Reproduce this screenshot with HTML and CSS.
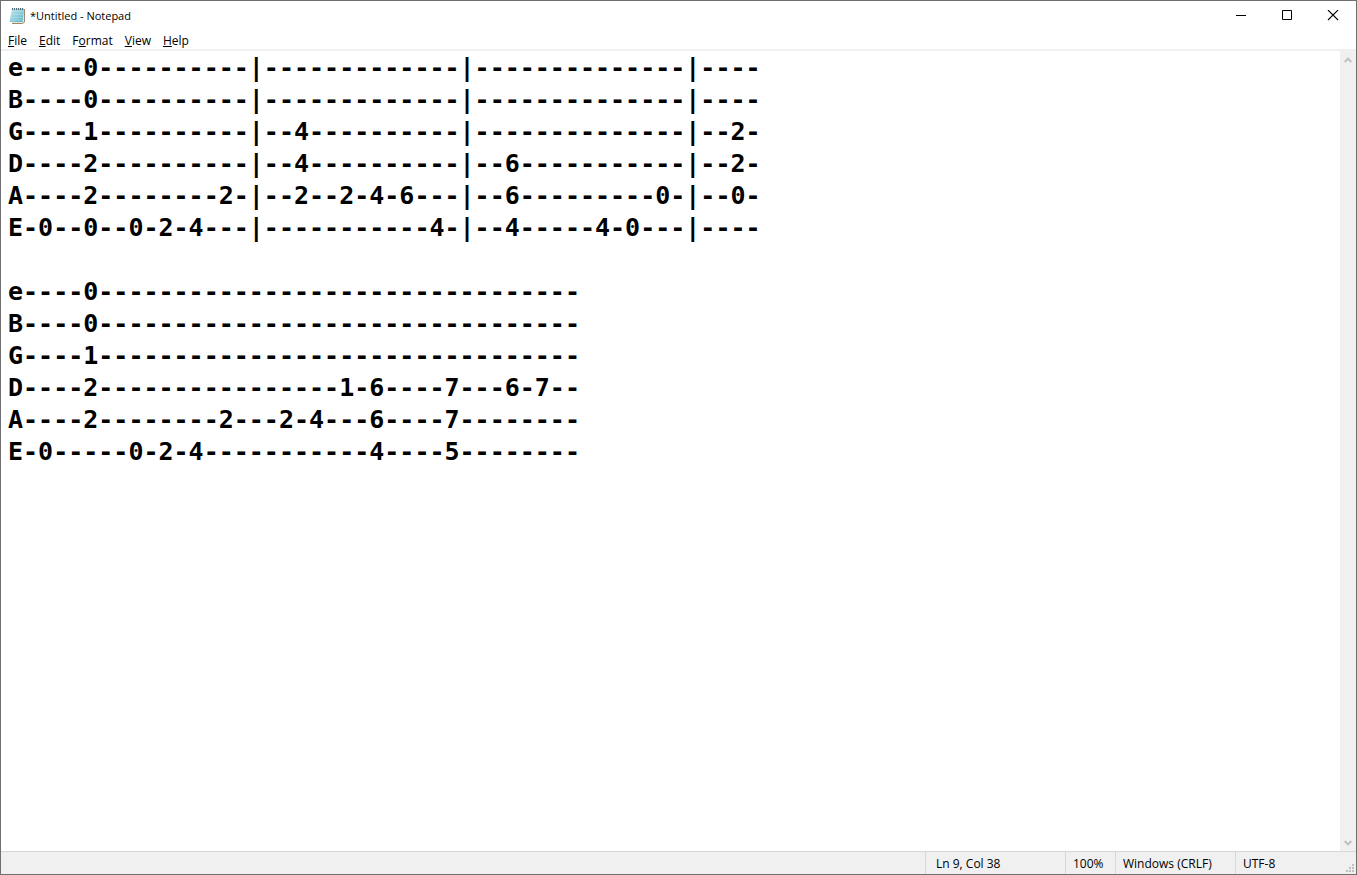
FILE: index.html
```html
<!DOCTYPE html>
<html lang="en">
<head>
<meta charset="utf-8">
<title>*Untitled - Notepad</title>
<link rel="stylesheet" href="styles.css">
</head>
<body>
<div class="window">
  <header class="titlebar">
    <svg class="app-icon" width="17" height="17" viewBox="0 0 17 17" aria-hidden="true">
      <defs>
        <linearGradient id="page" x1="0" y1="0" x2="1" y2="1">
          <stop offset="0" stop-color="#c3e7ef"/>
          <stop offset="0.5" stop-color="#92cfdd"/>
          <stop offset="1" stop-color="#4eabc4"/>
        </linearGradient>
      </defs>
      <path d="M4 2H16V15L14 16.500H3Z" fill="#e9e4d2"/>
      <path d="M15.500 2V15L13.500 16.500H3" fill="none" stroke="#9a8a68"/>
      <path d="M3 1.500H15L13.500 15H0.500Z" fill="url(#page)"/>
      <path d="M3 4.500H14M2.500 7.500H13.500M2 10.500H13.500M1.500 13H13" stroke="#b5dfe9" stroke-width="0.700"/>
      <path d="M3.500 1V3M5.500 1V3M7.500 1V3M9.500 1V3M11.500 1V3M13.500 1V3" stroke="#4c6870"/>
    </svg>
    <h1 class="title">*Untitled - Notepad</h1>
    <div class="window-controls">
      <button class="window-button" type="button" aria-label="Minimize">
        <svg width="12" height="11" viewBox="0 0 12 11"><path d="M1 5.500H11" stroke="#000"/></svg>
      </button>
      <button class="window-button" type="button" aria-label="Maximize">
        <svg width="12" height="11" viewBox="0 0 12 11"><path d="M1.500 .5H10.500V9.500H1.500Z" fill="none" stroke="#000"/></svg>
      </button>
      <button class="window-button" type="button" aria-label="Close">
        <svg width="12" height="11" viewBox="0 0 12 11"><path d="M1 0L11 10M11 0L1 10" stroke="#000" stroke-width="1.100"/></svg>
      </button>
    </div>
  </header>
  <nav class="menubar" aria-label="Menu">
    <button class="menu" type="button"><u>F</u>ile</button>
    <button class="menu" type="button"><u>E</u>dit</button>
    <button class="menu" type="button">F<u>o</u>rmat</button>
    <button class="menu" type="button"><u>V</u>iew</button>
    <button class="menu" type="button"><u>H</u>elp</button>
  </nav>
  <main class="editor">
    <textarea class="document" aria-label="Document text" wrap="off" spellcheck="false">
e----0----------|-------------|--------------|----
B----0----------|-------------|--------------|----
G----1----------|--4----------|--------------|--2-
D----2----------|--4----------|--6-----------|--2-
A----2--------2-|--2--2-4-6---|--6---------0-|--0-
E-0--0--0-2-4---|-----------4-|--4-----4-0---|----

e----0--------------------------------
B----0--------------------------------
G----1--------------------------------
D----2----------------1-6----7---6-7--
A----2--------2---2-4---6----7--------
E-0-----0-2-4-----------4----5--------</textarea>
    <div class="scrollbar">
      <button class="scroll-button" type="button" aria-label="Scroll up">
        <svg width="8" height="6" viewBox="0 0 8 6"><path d="M.7 5L4 1.600L7.300 5" fill="none" stroke="#bfbfbf" stroke-width="2"/></svg>
      </button>
      <button class="scroll-button" type="button" aria-label="Scroll down">
        <svg width="8" height="6" viewBox="0 0 8 6"><path d="M.7 1L4 4.400L7.300 1" fill="none" stroke="#bfbfbf" stroke-width="2"/></svg>
      </button>
    </div>
  </main>
  <footer class="statusbar">
    <span class="status position">Ln 9, Col 38</span>
    <span class="status zoom">100%</span>
    <span class="status line-ending">Windows (CRLF)</span>
    <span class="status encoding">UTF-8</span>
    <svg class="grip" width="8" height="8" viewBox="0 0 8 8" aria-hidden="true">
      <path d="M6 0h2v2h-2zM3 3h2v2h-2zM6 3h2v2h-2zM0 6h2v2h-2zM3 6h2v2h-2zM6 6h2v2h-2z" fill="#bfbfbf"/>
    </svg>
  </footer>
</div>
</body>
</html>
```
FILE: styles.css
```css
* {
  box-sizing: border-box;
}

body {
  margin: 0;
  font-family: "Open Sans", "Noto Sans", sans-serif;
  font-size: 12px;
  line-height: 16px;
  color: #000;
}

button {
  margin: 0;
  padding: 0;
  border: 0;
  background: none;
  font: inherit;
  color: inherit;
}

.window {
  display: flex;
  flex-direction: column;
  height: 100vh;
  border: 1px solid #6f6f6f;
  background: #fff;
}

.titlebar {
  display: flex;
  align-items: center;
  height: 29px;
  padding-left: 8px;
}

.app-icon {
  flex: none;
}

.title {
  flex: 1;
  margin: 0 0 0 4px;
  font-size: 11px;
  font-weight: 400;
}

.window-controls {
  display: flex;
  height: 100%;
}

.window-button {
  display: grid;
  place-items: center;
  width: 46px;
}

.menubar {
  display: flex;
  gap: 12px;
  height: 21px;
  padding: 2px 7px 0;
  border-bottom: 2px solid #f0f0f0;
}

.menu {
  font-size: 12px;
}

.menu u {
  text-underline-offset: 1px;
}

.editor {
  display: flex;
  flex: 1;
  min-height: 0;
}

.document {
  flex: 1;
  min-width: 0;
  padding: 1px 7px;
  border: 0;
  outline: 0;
  resize: none;
  overflow: hidden;
  background: #fff;
  color: #000;
  font: bold 25px/32px "DejaVu Sans Mono", monospace;
}

.scrollbar {
  display: flex;
  flex-direction: column;
  justify-content: space-between;
  width: 16px;
  background: #f0f0f0;
}

.scroll-button {
  display: grid;
  place-items: center;
  height: 17px;
}

.statusbar {
  display: flex;
  justify-content: flex-end;
  height: 23px;
  padding-right: 2px;
  border-top: 1px solid #d7d7d7;
  background: #f0f0f0;
}

.status {
  padding: 4px 7px 0;
  border-left: 1px solid #d7d7d7;
  white-space: nowrap;
}

.position {
  width: 140px;
  padding-left: 10px;
}

.zoom {
  width: 50px;
}

.line-ending {
  width: 120px;
}

.encoding {
  width: 111px;
}

.grip {
  align-self: flex-end;
  margin-bottom: 2px;
}
```
